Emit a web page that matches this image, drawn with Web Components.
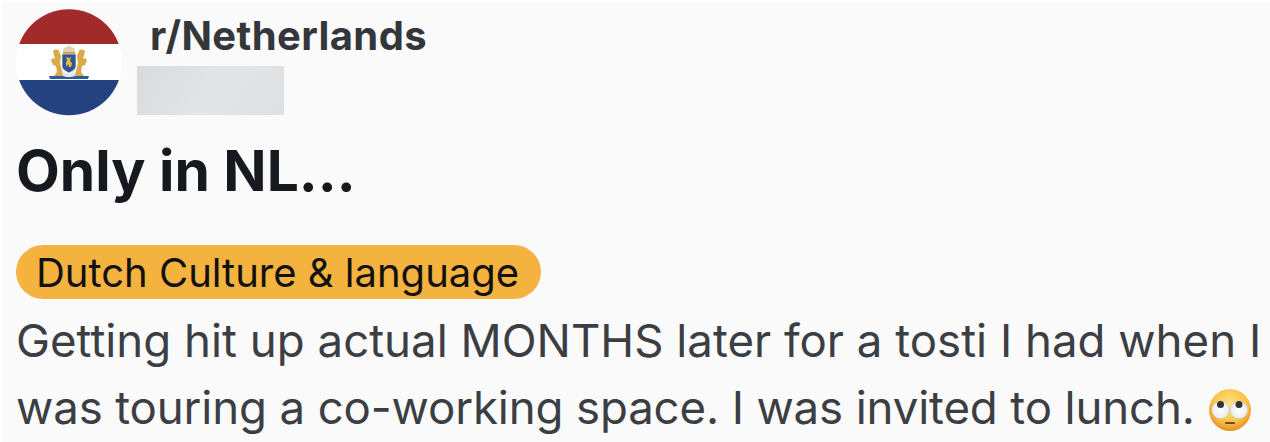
<!DOCTYPE html>
<html><head><meta charset="utf-8"><style>
html,body{margin:0;padding:0;background:#fff;width:1270px;height:442px;overflow:hidden}
.l2{letter-spacing:-.14px}
</style></head><body>
<reddit-post>
<flag-avatar slot="avatar"></flag-avatar>
<span slot="community">r/Netherlands</span>
<span slot="title">Only in NL...</span>
<post-tag slot="tag">Dutch Culture &amp; language</post-tag>
<span>Getting hit up actual MONTHS later for a tosti I had when I<br><span class="l2">was touring a co-working space. I was invited to lunch. <eye-roll></eye-roll></span></span>
</reddit-post>
<script>
function def(name,html){customElements.define(name,class extends HTMLElement{constructor(){super();this.attachShadow({mode:'open'}).innerHTML=html}})}
def('reddit-post',`<style>
:host{display:block;box-sizing:border-box;margin:2px 0 0 2px;width:1268px;height:440px;background:#fafafb;padding:7px 0 0 14px;font-family:Inter,"Liberation Sans",sans-serif;color:#33363b;overflow:hidden}
.head{display:flex;height:107px}
.side{display:flex;flex-direction:column;margin-left:15px}
.name{font-size:40px;font-weight:700;letter-spacing:.4px;line-height:40px;height:57px;padding-left:13px;color:#33363b;padding-top:7px;box-sizing:border-box;white-space:nowrap}
.blur{width:147px;height:49px;background:linear-gradient(120deg,#d9dadc,#e3e4e6 50%,#dfe0e2)}
.title{font-size:56.9px;font-weight:700;line-height:64px;margin-top:23px;color:#16191d;white-space:nowrap}
.tag{margin-top:42px}
.body{font-size:45.6px;line-height:67px;margin-top:8px;white-space:nowrap;color:#3b3e43}
</style>
<div class="head"><slot name="avatar"></slot><div class="side"><div class="name"><slot name="community"></slot></div><div class="blur"></div></div></div>
<div class="title"><slot name="title"></slot></div>
<div class="tag"><slot name="tag"></slot></div>
<div class="body"><slot></slot></div>`);
def('post-tag',`<style>
:host{display:block;box-sizing:border-box;width:525px;height:54px;border-radius:27px;background:#f4b23f;color:#111;font-size:40px;line-height:56px;padding-left:20px;white-space:nowrap}
</style><slot></slot>`);
def('flag-avatar',`<style>:host{display:block;width:106px;height:107px;flex:none}svg{display:block}</style>
<svg width="106" height="107" viewBox="0 0 106 107">
<defs><clipPath id="c"><circle cx="53" cy="53.3" r="53"/></clipPath></defs>
<g clip-path="url(#c)">
<rect width="106" height="35" fill="#a12a2b"/>
<rect y="35" width="106" height="36" fill="#fff"/>
<rect y="71" width="106" height="36" fill="#24427f"/>
</g>
<path d="M47 62q6 6 12 0l1 5H46z" fill="#dfe6ee"/>
<path d="M33 67h14q6 2 12 0h14l-1 3H34z" fill="#2f5ca0"/>
<path d="M37 42c2-2 5-2 6 0l2 5-1 7 2 8 1 5h-9l3-4-1-6-3-1-2-5 2-2 2 1z" fill="#d9a94a"/>
<path d="M69 42c-2-2-5-2-6 0l-2 5 1 7-2 8-1 5h9l-3-4 1-6 3-1 2-5-2-2-2 1z" fill="#d9a94a"/>
<path d="M47 44c-1-3 1-6 4-6l2-2 2 2c3 0 5 3 4 6z" fill="#e3d3ac"/>
<rect x="47" y="43" width="12" height="2" fill="#c99b3f"/>
<path d="M46 45h14v12c0 3-3 5-7 7-4-2-7-4-7-7z" fill="#2c5697" stroke="#eadfc6" stroke-width=".8"/>
<path d="M50 48l3 1 2-1-1 4 2 2-1 4h-2l-1-3-2 3v-4l1-3z" fill="#e8b93e"/>
</svg>`);
def('eye-roll',`<style>:host{display:inline-block;width:42px;height:42px;vertical-align:-7px;margin-left:2px}svg{display:block}</style>
<svg width="42" height="42" viewBox="0 0 42 42">
<defs><radialGradient id="f" cx=".5" cy=".38" r=".64"><stop offset="0" stop-color="#fde38a"/><stop offset=".6" stop-color="#fac74a"/><stop offset="1" stop-color="#e58a22"/></radialGradient>
<radialGradient id="e" cx=".5" cy=".5" r=".55"><stop offset="0" stop-color="#fff"/><stop offset=".78" stop-color="#eee"/><stop offset="1" stop-color="#a9a9a9"/></radialGradient></defs>
<circle cx="21" cy="21" r="21" fill="url(#f)"/>
<circle cx="11.5" cy="21" r="9" fill="url(#e)"/><circle cx="30" cy="21" r="9" fill="url(#e)"/>
<circle cx="11.5" cy="15.5" r="3.5" fill="#333"/><circle cx="30" cy="15.5" r="3.5" fill="#333"/>
<rect x="16" y="33" width="10" height="2" rx="1" fill="#6b4a1e"/>
</svg>`);
</script>
</body></html>
